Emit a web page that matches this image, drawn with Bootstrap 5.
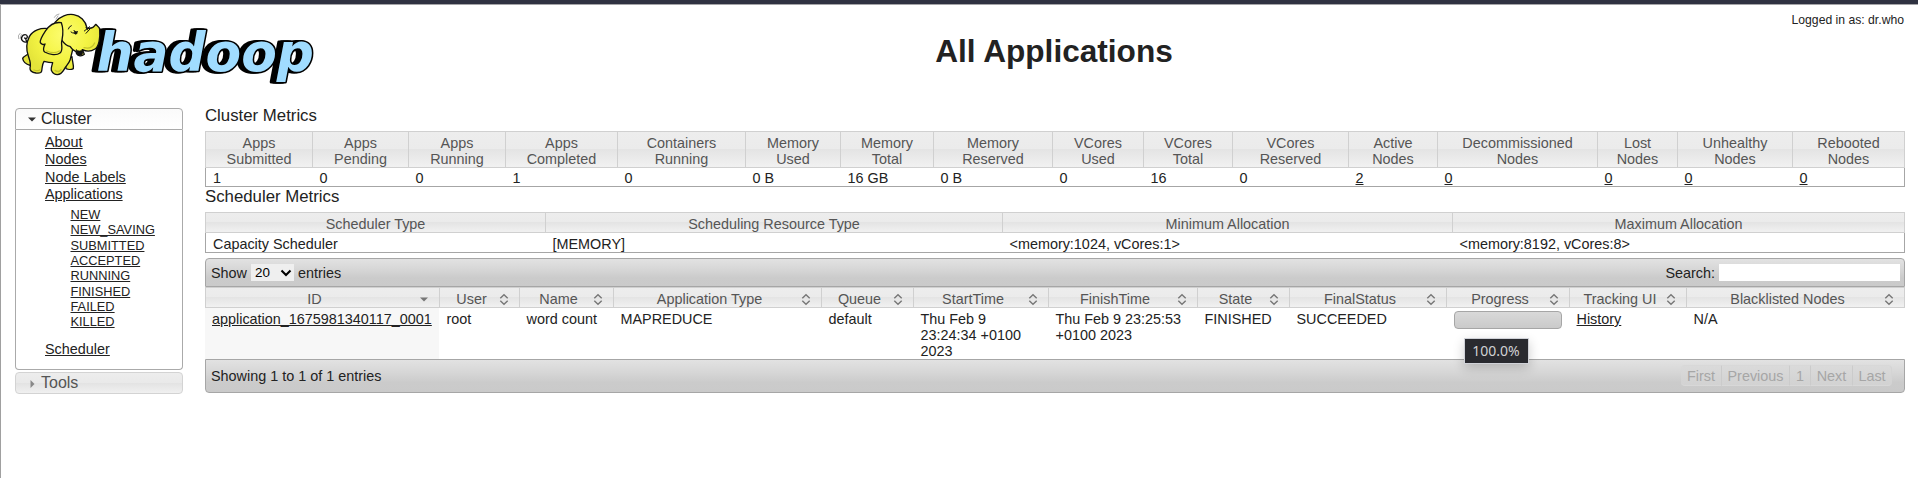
<!DOCTYPE html>
<html lang="en">
<head>
<meta charset="utf-8">
<title>All Applications</title>
<meta name="viewport" content="width=device-width, initial-scale=1">
<link href="https://cdn.jsdelivr.net/npm/bootstrap@5.3.0/dist/css/bootstrap.min.css" rel="stylesheet">
<style>
body{font-family:"Liberation Sans",Arial,sans-serif;font-size:14.4px;line-height:16px;color:#222;background:#fff;height:478px;overflow:hidden;border-top:4px solid #2f3241}
a{color:#222}
.page-frame{height:474px;border-top:1px solid #a5a5a8;border-left:1px solid #a0a0a0}
.page-head{height:103px;padding:3px 14px 0 14px}
.logo-box{width:300px}
.logo-box svg{overflow:visible}
.logo-text{font:italic 700 53px "DejaVu Sans",sans-serif;fill:#a0dcff;stroke:#000;stroke-width:3.2px;paint-order:stroke;stroke-linejoin:round;filter:drop-shadow(-1.5px 0 0 #000) drop-shadow(-2.5px .3px 0 #000)}
.page-title{font-size:31.6px;font-weight:700;line-height:36px;color:#222;margin:25px 0 0;padding-left:189px}
.login{width:300px;font-size:12.2px;line-height:14px;padding-top:5px}
.side{width:168px;margin-left:14px}
.side-head{height:22px;font-size:16px;line-height:18px;padding:1px 0 0 8px;border:1px solid #aaa;border-radius:4px 4px 0 0;background:linear-gradient(#fafafa,#fff)}
.side-head svg{margin:0 1px 0 0}
.side-body{height:240px;border:1px solid #aaa;border-top:0;border-radius:0 0 4px 4px;padding:4px 0 0 29px;line-height:17.4px}
.side-sub{font-size:12.8px;line-height:15.3px;padding:3.4px 0 11.5px 25.5px}
.side-tools{height:22px;margin-top:2px;border-color:#d3d3d3;border-radius:4px;color:#555;background:linear-gradient(#ededed 0,#e9e9e9 50%,#e3e3e3 51%,#f0f0f0 100%)}
.main-col{width:1700px;margin-left:22px}
.section-title{font-size:16.8px;line-height:20px;font-weight:400;margin:0;color:#222}
.first-title{margin-top:-2px;height:25px}
.grid-table{width:1700px;table-layout:fixed;border-collapse:separate;border-spacing:0;margin:0}
.grid-table th{border:solid #d0d0d0;border-width:1px 0 1px 1px;font-weight:400;color:#555;text-align:center;padding:3px 6px 0;background:linear-gradient(#ededed 0,#ebebeb 49%,#e4e4e4 50%,#f1f1f1 100%)}
.grid-table th:last-child{border-right-width:1px}
.grid-table td{padding:3px 7px 0 7.5px;vertical-align:top}
.framed td{border-bottom:1px solid #a6a6a6}
.framed td:first-child{border-left:1px solid #a6a6a6;padding-left:7px}
.framed td:last-child{border-right:1px solid #a6a6a6}
.cluster td{padding-top:2px}
.apps th div{position:relative;padding-right:16px}
.apps th svg{position:absolute;right:1px;top:1px}
.apps td.sorted{background:#f7f7f7;padding-left:7px;padding-right:0}
.tool-strip{width:1700px;border:1px solid #a6a6a6;background:linear-gradient(#e2e2e2 0,#d6d6d6 40%,#cbcbcb 70%,#cacaca 100%);padding:0 6px 0 5px}
.strip-top{height:29px;border-radius:4px 4px 0 0;margin-top:5px}
.strip-bottom{height:34px;border-radius:0 0 4px 4px;padding-right:12px}
.len-box{width:43px;height:17px;background:#efefef;color:#000;font-size:13.4px;padding:0 2px 0 4px;margin:0 4px 0 4px}
.search-box{width:181px;height:17px;background:#fff;border:0;margin:0 -2px 0 4px}
.bar-cell{height:18px;width:108px;border:1px solid #a6a6a6;border-radius:4px;background:linear-gradient(#d9d9d9,#cacaca)}
.tip{left:9px;top:26px;width:65px;height:26px;z-index:5;background:#292a2f;border:1px solid #d0d2d8;color:#d0d1d3;font:14px/24px "Noto Sans",sans-serif;text-align:center;box-shadow:0 4px 12px rgba(0,0,0,.2)}
.pager{margin-top:-1px}
.pager span{height:21px;line-height:20px;text-align:center;color:#a6a6a6;background:linear-gradient(#dadada,#d2d2d2);border:1px solid #d8d8d8;border-left-width:0;border-right-color:#cbcbcb}
.pager span:first-child{border-radius:4px 0 0 4px}
.pager span:last-child{border-radius:0 4px 4px 0;border-right-color:#d4d4d4}
</style>
</head>
<body>
<svg width="0" height="0" class="position-absolute"><defs>
<g id="both" fill="none" stroke="#777" stroke-width="1.4"><path d="M4.300 6.200 8 2.700l3.700 3.500M4.300 8.800 8 12.300l3.700-3.500"/></g>
</defs></svg>
<div class="page-frame">
<header class="page-head d-flex justify-content-between">
<div class="logo-box">
<svg width="300" height="78" viewBox="15 8 300 78" role="img" aria-label="hadoop">
<defs><radialGradient id="skin" gradientUnits="userSpaceOnUse" cx="190" cy="105" r="120"><stop offset="0" stop-color="#fcfc70"/><stop offset=".6" stop-color="#f4f444"/><stop offset="1" stop-color="#e4e43a"/></radialGradient></defs>
<text class="logo-text" x="96.500" y="71" textLength="217.500" lengthAdjust="spacingAndGlyphs">hadoop</text>
<g transform="scale(.33333)" stroke="#111" stroke-width="4" stroke-linejoin="round" stroke-linecap="round" fill="url(#skin)">
<path d="M84 125c-12 5-24-5-18-15 4-8 15-8 16 0 0 5-5 7-8 4M82 126q-4-3-5-10" fill="none"/>
<path d="M198 206c6 3 17 3 22 0 2-12-4-24-4-36l-22 8z"/>
<path d="M88 160c-8 6-18 8-20 16 2 9 10 17 22 20l8-14z"/>
<path d="M146 86c-24-3-48 4-58 24-12 24-8 44-3 58 4 12 9 22 5 36-1 10 6 13 18 15 8 1 16 1 17-6 2-10 1-20 7-29 8 2 16 4 26 4-2 10-6 16-4 23 3 7 11 13 18 13 9 0 16-8 20-15 4-10 14-17 18-28l10-40-30-60z"/>
<path d="M165 67c14-18 38-26 56-23 20 3 36 18 40 40 14 3 22-4 26-11 6 6 13 9 12 16 2 24-2 50-14 58-12 8-26 8-38 2l6 14c-9 8-23 5-25-8-8-4-14-9-18-16-14 0-40-30-45-72z"/>
<path d="M229 150c6 5 14 3 19-1 2 9 0 17-8 17-7 0-11-8-11-16z" fill="#111" stroke-width="2"/>
<path d="M184 68c-19-3-36 8-47 24-8 12-18 30-16 36 3 5 10 7 14 4-4 9-8 19-1 24 16 9 36 11 46 3 11-9 3-22 5-34 3-17 8-33-1-57z"/>
<path d="M213 96q10 8 20-1M205 87q2-8 9-10M222 91l5 8M253 93l16-13M258 100l12-13M258 82l5 8" fill="none" stroke-width="3"/>
<path d="M225 94q8-2 7 6-5 7-10 0z" fill="#111" stroke-width="1"/>
<path d="M163 52q3-8 14-10M168 57l6-9M56 116q-4-10 4-16M64 104l-3 10" fill="none" stroke="#555" stroke-width="1.500"/>
<path d="M140 153q22 10 38 0M102 210q10 4 17 0M165 211q12 8 18-2M252 143q22 6 32-14" fill="none" stroke="#c4c42c" stroke-width="4"/>
</g>
</svg>
</div>
<h1 class="page-title">All Applications</h1>
<div class="login text-end">Logged in as: dr.who</div>
</header>
<div class="d-flex">
<nav class="side">
<div class="side-head d-flex align-items-start"><svg width="16" height="16" viewBox="0 0 16 16"><path d="M4 7.500h8L8 11.500z" fill="#333"/></svg>Cluster</div>
<div class="side-body">
<a class="d-table" href="#">About</a><a class="d-table" href="#">Nodes</a><a class="d-table" href="#">Node Labels</a><a class="d-table" href="#">Applications</a>
<div class="side-sub"><a class="d-table" href="#">NEW</a><a class="d-table" href="#">NEW_SAVING</a><a class="d-table" href="#">SUBMITTED</a><a class="d-table" href="#">ACCEPTED</a><a class="d-table" href="#">RUNNING</a><a class="d-table" href="#">FINISHED</a><a class="d-table" href="#">FAILED</a><a class="d-table" href="#">KILLED</a></div>
<a class="d-table" href="#">Scheduler</a>
</div>
<div class="side-head side-tools d-flex align-items-start"><svg width="16" height="16" viewBox="0 0 16 16"><path d="M6.500 6v8l4-4z" fill="#888"/></svg>Tools</div>
</nav>
<main class="main-col">
<h3 class="section-title first-title">Cluster Metrics</h3>
<table class="grid-table framed cluster">
<colgroup><col style="width:107px"><col style="width:96px"><col style="width:97px"><col style="width:112px"><col style="width:128px"><col style="width:95px"><col style="width:93px"><col style="width:119px"><col style="width:91px"><col style="width:89px"><col style="width:116px"><col style="width:89px"><col style="width:160px"><col style="width:80px"><col style="width:115px"><col style="width:113px"></colgroup>
<thead><tr><th>Apps<br>Submitted</th><th>Apps<br>Pending</th><th>Apps<br>Running</th><th>Apps<br>Completed</th><th>Containers<br>Running</th><th>Memory<br>Used</th><th>Memory<br>Total</th><th>Memory<br>Reserved</th><th>VCores<br>Used</th><th>VCores<br>Total</th><th>VCores<br>Reserved</th><th>Active<br>Nodes</th><th>Decommissioned<br>Nodes</th><th>Lost<br>Nodes</th><th>Unhealthy<br>Nodes</th><th>Rebooted<br>Nodes</th></tr></thead>
<tbody><tr><td>1</td><td>0</td><td>0</td><td>1</td><td>0</td><td>0 B</td><td>16 GB</td><td>0 B</td><td>0</td><td>16</td><td>0</td><td><a href="#">2</a></td><td><a href="#">0</a></td><td><a href="#">0</a></td><td><a href="#">0</a></td><td><a href="#">0</a></td></tr></tbody>
</table>
<h3 class="section-title" style="height:25px">Scheduler Metrics</h3>
<table class="grid-table framed">
<colgroup><col style="width:340px"><col style="width:457px"><col style="width:450px"><col style="width:453px"></colgroup>
<thead><tr><th>Scheduler Type</th><th>Scheduling Resource Type</th><th>Minimum Allocation</th><th>Maximum Allocation</th></tr></thead>
<tbody><tr><td>Capacity Scheduler</td><td>[MEMORY]</td><td>&lt;memory:1024, vCores:1&gt;</td><td>&lt;memory:8192, vCores:8&gt;</td></tr></tbody>
</table>
<div class="tool-strip strip-top d-flex align-items-center justify-content-between">
<div class="d-flex align-items-center">Show <span class="len-box d-flex align-items-center justify-content-between">20<svg width="12" height="10" viewBox="0 0 12 10"><path d="M1.500 2.500 6 7l4.500-4.500" fill="none" stroke="#000" stroke-width="2.100"/></svg></span>entries</div>
<label class="d-flex align-items-center">Search:<input class="search-box" type="text"></label>
</div>
<table class="grid-table apps">
<colgroup><col style="width:234px"><col style="width:80px"><col style="width:94px"><col style="width:208px"><col style="width:92px"><col style="width:135px"><col style="width:149px"><col style="width:92px"><col style="width:157px"><col style="width:123px"><col style="width:117px"><col style="width:219px"></colgroup>
<thead><tr>
<th><div>ID<svg width="16" height="14" viewBox="0 0 16 14"><path d="M4 5.500h8L8 9.500z" fill="#777"/></svg></div></th>
<th><div>User<svg width="16" height="14"><use href="#both"/></svg></div></th>
<th><div>Name<svg width="16" height="14"><use href="#both"/></svg></div></th>
<th><div>Application Type<svg width="16" height="14"><use href="#both"/></svg></div></th>
<th><div>Queue<svg width="16" height="14"><use href="#both"/></svg></div></th>
<th><div>StartTime<svg width="16" height="14"><use href="#both"/></svg></div></th>
<th><div>FinishTime<svg width="16" height="14"><use href="#both"/></svg></div></th>
<th><div>State<svg width="16" height="14"><use href="#both"/></svg></div></th>
<th><div>FinalStatus<svg width="16" height="14"><use href="#both"/></svg></div></th>
<th><div>Progress<svg width="16" height="14"><use href="#both"/></svg></div></th>
<th><div class="text-nowrap">Tracking UI<svg width="16" height="14"><use href="#both"/></svg></div></th>
<th><div>Blacklisted Nodes<svg width="16" height="14"><use href="#both"/></svg></div></th>
</tr></thead>
<tbody><tr>
<td class="sorted"><a href="#">application_1675981340117_0001</a></td><td>root</td><td>word count</td><td>MAPREDUCE</td><td>default</td><td>Thu Feb 9<br>23:24:34 +0100<br>2023</td><td class="text-nowrap">Thu Feb 9 23:25:53<br>+0100 2023</td><td>FINISHED</td><td>SUCCEEDED</td>
<td><div class="bar-cell position-relative"><div class="tip position-absolute">100.0%</div></div></td>
<td><a href="#">History</a></td><td>N/A</td>
</tr></tbody>
</table>
<div class="tool-strip strip-bottom d-flex align-items-center justify-content-between">
<span>Showing 1 to 1 of 1 entries</span>
<div class="pager d-flex"><span style="width:41px">First</span><span style="width:68px">Previous</span><span style="width:21px">1</span><span style="width:42px">Next</span><span style="width:39px">Last</span></div>
</div>
</main>
</div>
</div>
<script src="https://cdn.jsdelivr.net/npm/bootstrap@5.3.0/dist/js/bootstrap.bundle.min.js"></script>
</body>
</html>
